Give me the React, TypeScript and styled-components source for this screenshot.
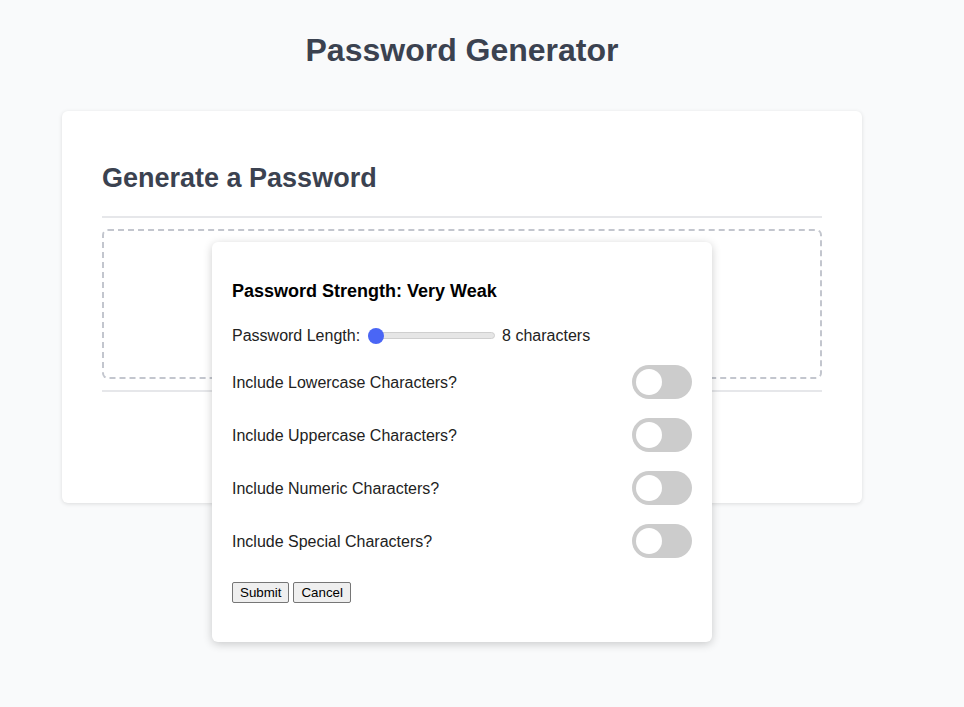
import React, { useState } from "react";
import styled, { createGlobalStyle } from "styled-components";

const Global = createGlobalStyle`
  html, body { margin: 0; padding: 0; background: #f9fafb; }
  body { font-family: "Liberation Sans", Arial, sans-serif; }
  * { box-sizing: border-box; }
`;

const Page = styled.div`
  position: relative;
  width: 924px;
  min-height: 707px;
  padding-top: 32px;
`;

const Title = styled.h1`
  margin: 0 0 43px;
  text-align: center;
  font-size: 32px;
  line-height: 36px;
  font-weight: 700;
  color: #3b4250;
`;

const Card = styled.section`
  margin: 0 62px;
  background: #fff;
  border-radius: 6px;
  box-shadow: 0 1px 4px rgba(0, 0, 0, 0.12);
  padding: 52px 40px 0;
  height: 392px;
`;

const CardHeading = styled.h2`
  margin: 0 0 23px;
  font-size: 27px;
  line-height: 30px;
  font-weight: 700;
  color: #3b4250;
`;

const Divider = styled.hr`
  margin: 0;
  border: 0;
  height: 2px;
  background: #e6e7ea;
`;

const DropZone = styled.div`
  margin: 11px 0 11px;
  height: 150px;
  border: 2px dashed #c3c6ce;
  border-radius: 6px;
`;

const Modal = styled.div`
  position: absolute;
  left: 212px;
  top: 242px;
  width: 500px;
  height: 400px;
  background: #fff;
  border-radius: 6px;
  box-shadow: 0 2px 10px rgba(0, 0, 0, 0.2);
  padding: 38px 20px 20px;
  color: #222;
  display: flex;
  flex-direction: column;
`;

const Strength = styled.h3`
  margin: 0 0 23px;
  font-size: 18px;
  line-height: 22px;
  font-weight: 700;
  color: #000;
`;

const LengthRow = styled.div`
  display: flex;
  align-items: center;
  height: 20px;
  padding-top: 1px;
  font-size: 16px;
  color: #222;
  margin-bottom: 20px;
`;

const Range = styled.input`
  -webkit-appearance: none;
  appearance: none;
  width: 127px;
  height: 7px;
  margin: 0 7px 0 8px;
  background: #e6e6e6;
  border: 1px solid #cfcfcf;
  border-radius: 4px;
  outline: none;
  &::-webkit-slider-thumb {
    -webkit-appearance: none;
    width: 16px;
    height: 16px;
    border-radius: 50%;
    background: #4a66f5;
    border: none;
    margin-left: -1px;
  }
`;

const OptionList = styled.div`
  display: flex;
  flex-direction: column;
  gap: 19px;
`;

const OptionRow = styled.label`
  display: flex;
  align-items: center;
  justify-content: space-between;
  height: 34px;
  font-size: 16px;
  color: #222;
`;

const OptionText = styled.span`
  padding-top: 2px;
`;

const Switch = styled.span<{ $on: boolean }>`
  position: relative;
  width: 60px;
  height: 34px;
  border-radius: 17px;
  background: ${(p) => (p.$on ? "#4a66f5" : "#cccccc")};
  cursor: pointer;
  &::after {
    content: "";
    position: absolute;
    top: 4px;
    left: ${(p) => (p.$on ? "30px" : "4px")};
    width: 26px;
    height: 26px;
    border-radius: 50%;
    background: #fff;
  }
`;

const Buttons = styled.div`
  display: flex;
  gap: 4px;
  margin-top: 24px;
`;

const Button = styled.button`
  font-family: "Liberation Sans", Arial, sans-serif;
  font-size: 13.33px;
  height: 21px;
  padding: 1px 7px;
  background: #efefef;
  color: #000;
  border: 1px solid #767676;
  border-radius: 2px;
`;

const options = [
  "Include Lowercase Characters?",
  "Include Uppercase Characters?",
  "Include Numeric Characters?",
  "Include Special Characters?",
];

export default function App() {
  const [length, setLength] = useState(8);
  const [on, setOn] = useState<boolean[]>([false, false, false, false]);
  return (
    <>
      <Global />
      <Page>
        <Title>Password Generator</Title>
        <Card>
          <CardHeading>Generate a Password</CardHeading>
          <Divider />
          <DropZone />
          <Divider />
        </Card>
        <Modal>
          <Strength>Password Strength: Very Weak</Strength>
          <LengthRow>
            Password Length:
            <Range
              type="range"
              min={8}
              max={128}
              value={length}
              onChange={(e) => setLength(Number(e.target.value))}
            />
            {length} characters
          </LengthRow>
          <OptionList>
            {options.map((o, i) => (
              <OptionRow key={o}>
                <OptionText>{o}</OptionText>
                <Switch
                  $on={on[i]}
                  onClick={() => setOn(on.map((v, j) => (j === i ? !v : v)))}
                />
              </OptionRow>
            ))}
          </OptionList>
          <Buttons>
            <Button>Submit</Button>
            <Button>Cancel</Button>
          </Buttons>
        </Modal>
      </Page>
    </>
  );
}
